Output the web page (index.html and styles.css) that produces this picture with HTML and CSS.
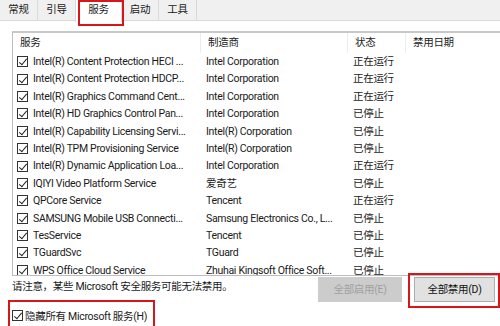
FILE: index.html
```html
<!DOCTYPE html>
<html lang="zh-CN">
<head>
<meta charset="utf-8">
<link rel="stylesheet" href="styles.css">
</head>
<body>
<div class="win">
  <div class="tabs">
    <div class="tab t1">常规</div>
    <div class="tab t2">引导</div>
    <div class="tab t3 active">服务</div>
    <div class="tab t4">启动</div>
    <div class="tab t5">工具</div>
    <div class="tab-rest"></div>
    <div class="mark mark-tab"></div>
  </div>
  <div class="panel">
    <div class="list">
      <div class="row head">
        <div class="c1">服务</div>
        <div class="c2">制造商</div>
        <div class="c3">状态</div>
        <div class="c4">禁用日期</div>
      </div>
      <div class="row"><div class="c1"><span class="cb"></span>Intel(R) Content Protection HECI ...</div><div class="c2">Intel Corporation</div><div class="c3">正在运行</div><div class="c4"></div></div>
      <div class="row"><div class="c1"><span class="cb"></span>Intel(R) Content Protection HDCP...</div><div class="c2">Intel Corporation</div><div class="c3">正在运行</div><div class="c4"></div></div>
      <div class="row"><div class="c1"><span class="cb"></span>Intel(R) Graphics Command Cent...</div><div class="c2">Intel Corporation</div><div class="c3">正在运行</div><div class="c4"></div></div>
      <div class="row"><div class="c1"><span class="cb"></span>Intel(R) HD Graphics Control Pan...</div><div class="c2">Intel Corporation</div><div class="c3">已停止</div><div class="c4"></div></div>
      <div class="row"><div class="c1"><span class="cb"></span>Intel(R) Capability Licensing Servi...</div><div class="c2">Intel(R) Corporation</div><div class="c3">已停止</div><div class="c4"></div></div>
      <div class="row"><div class="c1"><span class="cb"></span>Intel(R) TPM Provisioning Service</div><div class="c2">Intel(R) Corporation</div><div class="c3">已停止</div><div class="c4"></div></div>
      <div class="row"><div class="c1"><span class="cb"></span>Intel(R) Dynamic Application Loa...</div><div class="c2">Intel Corporation</div><div class="c3">正在运行</div><div class="c4"></div></div>
      <div class="row"><div class="c1"><span class="cb"></span>IQIYI Video Platform Service</div><div class="c2">爱奇艺</div><div class="c3">已停止</div><div class="c4"></div></div>
      <div class="row"><div class="c1"><span class="cb"></span>QPCore Service</div><div class="c2">Tencent</div><div class="c3">正在运行</div><div class="c4"></div></div>
      <div class="row"><div class="c1"><span class="cb"></span>SAMSUNG Mobile USB Connecti...</div><div class="c2">Samsung Electronics Co., L...</div><div class="c3">已停止</div><div class="c4"></div></div>
      <div class="row"><div class="c1"><span class="cb"></span>TesService</div><div class="c2">Tencent</div><div class="c3">已停止</div><div class="c4"></div></div>
      <div class="row"><div class="c1"><span class="cb"></span>TGuardSvc</div><div class="c2">TGuard</div><div class="c3">已停止</div><div class="c4"></div></div>
      <div class="row"><div class="c1"><span class="cb"></span>WPS Office Cloud Service</div><div class="c2">Zhuhai Kingsoft Office Soft...</div><div class="c3">已停止</div><div class="c4"></div></div>
    </div>
    <div class="bottom">
      <div class="left">
        <div class="note">请注意，某些 Microsoft 安全服务可能无法禁用。</div>
        <div class="hide"><span class="cb"></span>隐藏所有 Microsoft 服务(H)<div class="mark mark-hide"></div></div>
      </div>
      <div class="btns">
        <div class="btn disabled">全部启用(E)</div>
        <div class="btn primary">全部禁用(D)<div class="mark mark-btn"></div></div>
      </div>
    </div>
  </div>
</div>
</body>
</html>
```

FILE: styles.css
```css
* { box-sizing: border-box; }
html, body { margin: 0; padding: 0; }
body {
  width: 500px;
  height: 326px;
  overflow: hidden;
  background: #fff;
  font-family: Roboto, "Noto Sans CJK SC", sans-serif;
  font-size: 10.5px;
  letter-spacing: -0.3px;
  color: #1a1a1a;
}
.win { width: 500px; height: 326px; display: flex; flex-direction: column; overflow: hidden; }
.tabs {
  position: relative;
  height: 21px;
  display: flex;
  background: #f0f0f0;
  border-bottom: 1px solid #d9d9d9;
}
.tab {
  height: 20px;
  line-height: 20px;
  text-align: center;
  border-right: 1px solid #d9d9d9;
}
.t1 { width: 38px; }
.t2 { width: 38px; }
.t3 { width: 47px; }
.t4 { width: 37px; }
.t5 { width: 38px; }
.tab.active { background: #fff; height: 22px; border-left: 1px solid #d9d9d9; margin-left: -1px; z-index: 1; }
.tab-rest { flex: 1; }
.mark { position: absolute; border: 2px solid #d7161c; pointer-events: none; }
.mark-tab { left: 78px; top: 0; width: 46px; height: 26px; z-index: 2; }
.panel { flex: 1; padding: 10px 0 0 12px; display: flex; flex-direction: column; overflow: hidden; }
.list {
  width: 488px;
  height: 245px;
  border: 1px solid #bdbdbd;
  border-top: 2px solid #c8c8c8;
  border-right: none;
  overflow: hidden;
}
.row { display: grid; grid-template-columns: 188px 147px 58px 1fr; height: 17.4px; line-height: 17.4px; white-space: nowrap; }
.row.head { height: 20px; line-height: 19px; }
.head > div { padding-left: 7px; border-right: 1px solid #ececec; }
.head > .c4 { border-right: none; }
.row > div { overflow: hidden; }
.row:not(.head) .c1 { padding-left: 4px; display: flex; align-items: center; }
.row:not(.head) .c2, .row:not(.head) .c3 { padding-left: 5px; }
.cb {
  display: inline-block;
  width: 11px;
  height: 11px;
  border: 1px solid #333;
  margin-right: 5px;
  flex: none;
  position: relative;
  background: #fff;
}
.cb::after {
  content: "";
  position: absolute;
  left: 3px;
  top: 0px;
  width: 3px;
  height: 7px;
  border-right: 1.2px solid #222;
  border-bottom: 1.2px solid #222;
  transform: rotate(40deg);
}
.bottom { display: flex; justify-content: space-between; }
.left { display: flex; flex-direction: column; }
.note { margin-top: 2px; height: 18px; line-height: 18px; }
.hide { position: relative; margin-top: 11px; display: flex; align-items: center; height: 16px; }
.hide .cb { margin-right: 2px; }
.mark-hide { left: -4px; top: -7px; width: 147px; height: 30px; }
.btns { display: flex; gap: 12px; padding-right: 5px; margin-top: 1px; }
.btn { position: relative; height: 25px; line-height: 23px; text-align: center; }
.btn.disabled { width: 84px; background: #cccccc; color: #a0a0a0; border: 1px solid #cccccc; }
.btn.primary { width: 81px; background: #e1e1e1; border: 1px solid #adadad; color: #111; }
.mark-btn { left: -7px; top: -5px; width: 92px; height: 35px; }
```
